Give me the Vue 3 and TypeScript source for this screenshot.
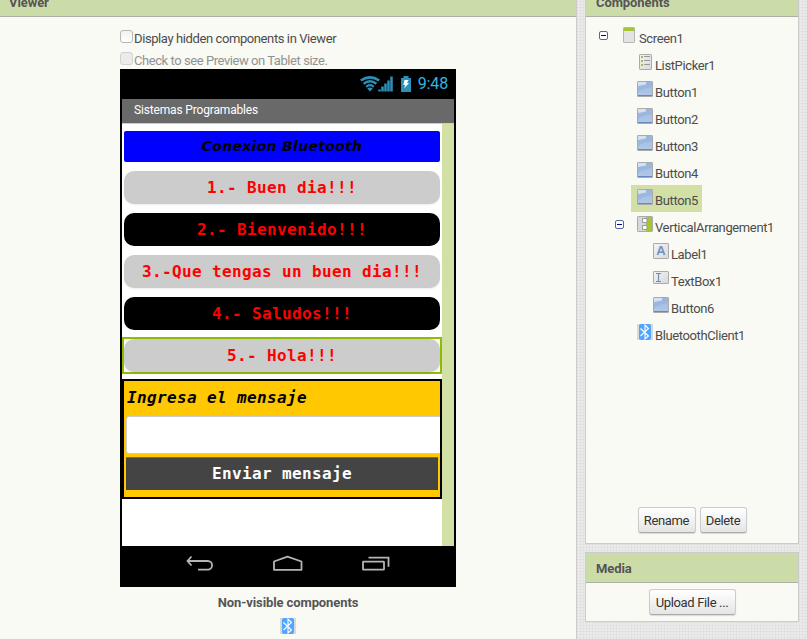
<script setup lang="ts">
type IconKind = 'screen' | 'list' | 'button' | 'vertical' | 'label' | 'textbox' | 'bluetooth'

interface TreeNode {
  name: string
  icon: IconKind
  depth: number
  expandable?: boolean
  selected?: boolean
}

const nodes: TreeNode[] = [
  { name: 'Screen1', icon: 'screen', depth: 0, expandable: true },
  { name: 'ListPicker1', icon: 'list', depth: 1 },
  { name: 'Button1', icon: 'button', depth: 1 },
  { name: 'Button2', icon: 'button', depth: 1 },
  { name: 'Button3', icon: 'button', depth: 1 },
  { name: 'Button4', icon: 'button', depth: 1 },
  { name: 'Button5', icon: 'button', depth: 1, selected: true },
  { name: 'VerticalArrangement1', icon: 'vertical', depth: 1, expandable: true },
  { name: 'Label1', icon: 'label', depth: 2 },
  { name: 'TextBox1', icon: 'textbox', depth: 2 },
  { name: 'Button6', icon: 'button', depth: 2 },
  { name: 'BluetoothClient1', icon: 'bluetooth', depth: 1 },
]

const phrases = [
  { text: '1.- Buen dia!!!', tone: 'gray' },
  { text: '2.- Bienvenido!!!', tone: 'black' },
  { text: '3.-Que tengas un buen dia!!!', tone: 'gray' },
  { text: '4.- Saludos!!!', tone: 'black' },
  { text: '5.- Hola!!!', tone: 'gray', selected: true },
]
</script>

<template>
  <div class="page">
    <svg class="defs" width="0" height="0">
      <defs>
        <linearGradient id="blueFace" x1="0" y1="0" x2="0" y2="1">
          <stop offset="0" stop-color="#9fbbe0" /><stop offset="1" stop-color="#b1c8e9" />
        </linearGradient>
        <linearGradient id="grayFace" x1="0" y1="0" x2="1" y2="1">
          <stop offset="0" stop-color="#f4f4f4" /><stop offset="1" stop-color="#d8d8d8" />
        </linearGradient>
        <symbol id="bluetooth" viewBox="0 0 16 16">
          <rect width="16" height="16" fill="#d9d9d9" />
          <rect x="2" width="12" height="16" rx="2" fill="#50a5ff" />
          <path d="M3.500 4.500 11.500 12 8 15V1l3.500 3.500L3.500 12" fill="none" stroke="#fff" stroke-width="1.100" />
        </symbol>
        <symbol id="screen" viewBox="0 0 16 16">
          <rect x="2.500" y=".5" width="11" height="15" rx=".6" fill="#e3e3e3" stroke="#b5b5b5" />
          <path d="M3 1h10v3H3z" fill="#a5c536" />
        </symbol>
        <symbol id="list" viewBox="0 0 16 16">
          <rect x="2.500" y=".5" width="12" height="15" rx=".6" fill="url(#grayFace)" stroke="#aaa" />
          <path d="M4 2h2v2H4zM4 6h2v2H4zM4 10h2v2H4z" fill="#a5c536" />
          <path d="M7 2.500h6M7 6.500h6M7 10.500h6" stroke="#999" />
        </symbol>
        <symbol id="button" viewBox="0 0 16 16">
          <rect x=".5" y=".5" width="15" height="15" rx=".6" fill="url(#blueFace)" stroke="#aaa" />
          <path d="M1 12Q3 8 15 6V1H1z" fill="#93b0da" opacity=".55" />
          <path d="M1 1h8v2.500L1 5z" fill="#e3ecf8" opacity=".8" />
          <path d="M1 14.500h14" stroke="#6488bf" />
        </symbol>
        <symbol id="vertical" viewBox="0 0 16 16">
          <rect x=".5" y=".5" width="15" height="15" rx=".6" fill="#d8d8d8" stroke="#aaa" />
          <path d="M9 1h6v14H9z" fill="#a5c536" />
          <path d="M5.500 2.500h4.500v4H5.500zM5.500 9.500h4.500v4H5.500z" fill="#fff" stroke="#999" />
        </symbol>
        <symbol id="label" viewBox="0 0 16 16">
          <rect x=".5" y=".5" width="15" height="15" rx=".6" fill="url(#grayFace)" stroke="#aaa" />
          <path d="M4.500 12 7.400 4h1.200l2.900 8M5.500 9.200h5" fill="none" stroke="#7195c8" stroke-width="1.800" />
        </symbol>
        <symbol id="textbox" viewBox="0 0 16 16">
          <rect x=".5" y="1.500" width="15" height="12" rx=".6" fill="url(#grayFace)" stroke="#aaa" />
          <path d="M3 3.500h5M5.500 4v7M3 11.500h5" fill="none" stroke="#6f8db9" stroke-width="1.200" />
        </symbol>
      </defs>
    </svg>

    <section class="viewer">
      <header class="bar clipped"><span>Viewer</span></header>
      <div class="work">
        <div class="check"><i class="box"></i><span>Display hidden components in Viewer</span></div>
        <div class="check off"><i class="box"></i><span>Check to see Preview on Tablet size.</span></div>

        <div class="phone">
          <div class="status">
            <svg width="33" height="16" viewBox="0 0 33 16" fill="none" stroke="#2c91b9">
              <path d="M.8 4.500Q10 -1.700 19.200 4.500" stroke-width="2.600" />
              <path d="M3.600 7.800Q10 2.800 16.400 7.800" stroke-width="2.400" />
              <path d="M6.200 10.800Q10 7.400 13.800 10.800" stroke-width="2.300" />
              <path d="M10 15.500 7.200 12.500Q10 10.500 12.800 12.500z" fill="#2c91b9" stroke="none" />
              <path d="M19.500 15.500v-2M22.500 15.500v-5M25.500 15.500v-8M28.500 15.500v-11M31.500 15.500V.6" stroke-width="2.500" />
            </svg>
            <svg class="battery" width="10" height="16" viewBox="0 0 10 16">
              <path d="M0 2h2.500V0h5v2H10v14H0z" fill="#2c91b9" />
              <path d="M3.500 4h4L6 7h2l-4.800 5.500L4.200 9H2.300z" fill="#fff" />
            </svg>
            <span class="clock">9:48</span>
          </div>
          <div class="title"><span>Sistemas Programables</span></div>
          <div class="screen">
            <div class="canvas">
              <div class="picker"><span>Conexion Bluetooth</span></div>
              <div v-for="p in phrases" :key="p.text" class="slot" :class="{ selected: p.selected }">
                <div class="phrase" :class="p.tone">{{ p.text }}</div>
              </div>
              <div class="arrangement">
                <div class="msg-label">Ingresa el mensaje</div>
                <div class="msg-input"></div>
                <div class="msg-send">Enviar mensaje</div>
              </div>
            </div>
            <div class="scroll"></div>
          </div>
          <div class="nav">
            <svg width="28" height="17" viewBox="0 0 28 17" fill="none" stroke="#b5b5b5" stroke-width="1.800">
              <path d="M5.500 1.500 1.500 6l4 4.500M1.500 6h20.300a4.200 4.200 0 0 1 0 8.600H12" />
            </svg>
            <svg width="30" height="17" viewBox="0 0 30 17" fill="none" stroke="#b5b5b5" stroke-width="1.800">
              <path d="M1 14.800V6.500L14.500 1.700 28.500 6.500v8.300z" stroke-linejoin="round" />
            </svg>
            <svg width="28" height="17" viewBox="0 0 28 17" fill="none" stroke="#b5b5b5" stroke-width="1.800">
              <rect x="1" y="6.700" width="21" height="8" rx=".5" /><path d="M6.500 2.700h20v9" />
            </svg>
          </div>
        </div>
        <div class="nonvisible">Non-visible components</div>
        <svg class="bt" width="16" height="16"><use href="#bluetooth" /></svg>
      </div>
    </section>

    <aside class="side">
      <section class="panel components">
        <header class="bar clipped"><span>Components</span></header>
        <ul class="tree">
          <li v-for="n in nodes" :key="n.name" :class="['depth' + n.depth]">
            <span class="toggle">
              <svg v-if="n.expandable" width="9" height="9" viewBox="0 0 9 9">
                <rect x=".5" y=".5" width="8" height="8" rx="1.500" fill="#fff" stroke="#5367a7" />
                <path d="M2 4.500h5" stroke="#0000a0" />
              </svg>
            </span>
            <span class="node" :class="{ selected: n.selected }">
              <svg width="16" height="16"><use :href="'#' + n.icon" /></svg>
              <span class="name">{{ n.name }}</span>
            </span>
          </li>
        </ul>
        <div class="actions"><button class="rename">Rename</button><button class="delete">Delete</button></div>
      </section>
      <section class="panel media">
        <header class="bar"><span>Media</span></header>
        <div class="upload"><button class="file">Upload File ...</button></div>
      </section>
    </aside>
  </div>
</template>

<style>
body { margin: 0; overflow: hidden; }
</style>

<style scoped>
* { box-sizing: border-box; }
.page {
  width: 808px; height: 639px; overflow: hidden; display: flex; gap: 8px;
  font-family: Roboto, sans-serif; font-size: 13px; color: #4c4c4c;
  background-color: #ebebeb;
  background-image:
    repeating-linear-gradient(90deg, transparent 0 1px, rgba(140, 140, 140, .08) 1px 2px, transparent 2px 3px),
    repeating-linear-gradient(0deg, transparent 0 1px, rgba(140, 140, 140, .08) 1px 2px, transparent 2px 3px);
  border-right: 1px solid #d0d0d0;
}
.defs { position: absolute; }
.viewer { width: 577px; height: 639px; background: #f9faf3; border-right: 1px solid #ccc; }
.bar {
  height: 30px; padding: 0 10px; background: #ccdca9; border-bottom: 1px solid #acb0a4;
  font-weight: 700; line-height: 31px; letter-spacing: -.08px; color: #555;
}
.bar.clipped { height: 17px; line-height: 5px; }
.viewer .bar { padding-left: 9px; }
.work { padding: 11px 0 0 120px; }
.check { height: 22px; display: flex; gap: 1px; line-height: 21px; letter-spacing: -.4px; white-space: nowrap; }
.check.off { color: #929292; height: 19px; letter-spacing: -.44px; }
.box { width: 13px; height: 13px; margin-top: 2px; border: 1px solid #b7b7b7; border-radius: 3px; background: linear-gradient(#f2f2f2, #fff); }
.off .box { border-color: #d2d2d2; background: #ebebeb; }
.phone { width: 336px; height: 518px; background: #000; padding: 0 2px; }
.status { height: 30px; display: flex; align-items: center; justify-content: flex-end; padding-right: 6px; }
.battery { margin: 0 7px 0 8px; }
.clock { font-size: 16px; line-height: 30px; letter-spacing: -.15px; color: #33b5e5; }
.title { height: 25px; background: #696969; border-bottom: 1px solid #ccc; padding-left: 12px; font-size: 12px; line-height: 23px; letter-spacing: -.16px; color: #fff; }
.screen { height: 422px; display: flex; background: #fff; }
.canvas { width: 320px; padding-top: 7px; }
.scroll { width: 12px; background: #d2e0a6; }
.picker {
  height: 31px; margin: 0 2px 7px; border-radius: 2px; background: #00f; color: #000;
  font: italic 700 14px/31px "DejaVu Sans", sans-serif; letter-spacing: .3px; text-align: center;
}
.slot { height: 37px; border: 2px solid transparent; margin-bottom: 5px; }
.slot.selected { border-color: #8fbd00; }
.phrase {
  height: 33px; border-radius: 10px; text-align: center; color: #f00;
  font: 700 16px/33px "DejaVu Sans Mono", monospace; letter-spacing: .37px;
}
.gray { background: #ccc; box-shadow: 0 1px 2px rgba(0, 0, 0, .08); }
.black { background: #000; }
.arrangement { height: 120px; background: #ffc800; border: 2px solid #000; overflow: hidden; font: 700 16px "DejaVu Sans Mono", monospace; letter-spacing: .37px; }
.msg-label { height: 35px; padding-left: 3px; line-height: 34px; font-style: italic; color: #000; }
.msg-input { width: 330px; height: 38px; margin-left: 2px; background: #fff; border: 1px solid #ccc; border-radius: 3px; }
.msg-send { height: 33px; margin: 3px 2px 0; background: #444; border-top: 1px solid #686868; text-align: center; color: #fff; line-height: 32px; }
.nav { height: 41px; display: flex; gap: 59px; padding: 9px 0 0 64px; }
.nonvisible { width: 336px; height: 31px; padding-top: 2px; text-align: center; font-weight: 700; line-height: 28px; letter-spacing: -.1px; color: #555; }
.bt { display: block; margin-left: 160px; }
.side { width: 214px; display: flex; flex-direction: column; gap: 8px; }
.panel { border: 1px solid #ccc; background: #f9faf3; }
.components { height: 544px; border-top: 0; display: flex; flex-direction: column; }
.tree { list-style: none; margin: 0; padding: 6px 0 0 13px; flex: 1; }
.tree li { height: 27px; display: flex; }
.toggle { width: 9px; padding-top: 8px; margin-right: 7px; line-height: 0; }
.depth1 { padding-left: 16px; }
.depth2 { padding-left: 32px; }
.node { height: 27px; display: flex; gap: 2px; padding: 4px 4px 0 6px; }
.node.selected { background: #d2e0a6; }
.name { line-height: 23px; letter-spacing: -.38px; white-space: nowrap; }
.actions { display: flex; gap: 4px; justify-content: center; padding: 0 0 10px; }
button {
  height: 26px; padding: 1px 0 0; border: 1px solid #ccc; border-bottom-color: #aaa; border-radius: 3px;
  background: linear-gradient(#fff, #e5e5e5); box-shadow: 0 1px 1px rgba(0, 0, 0, .12);
  font: 13px/23px Roboto, sans-serif; letter-spacing: -.35px; color: #333; white-space: nowrap;
}
.rename { width: 58px; }
.delete { width: 47px; }
.file { width: 87px; }
.media { height: 70px; }
.upload { padding-top: 6px; text-align: center; line-height: 0; }
</style>
